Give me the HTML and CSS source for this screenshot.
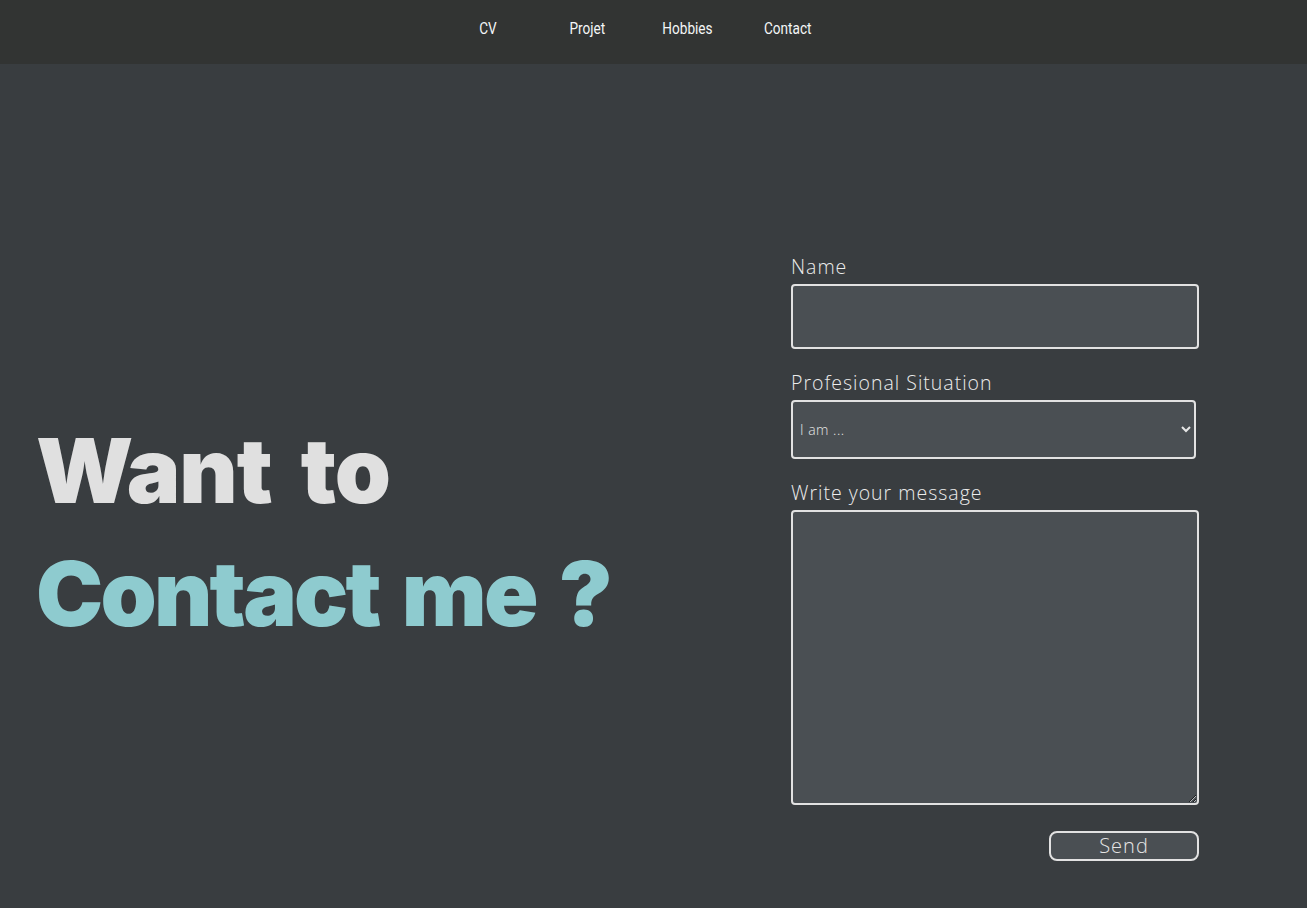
FILE: index.html
```html
<!DOCTYPE html>
<html lang="fr">
<head>
<meta charset="utf-8">
<title>Contact</title>
<link rel="stylesheet" href="styles.css">
</head>
<body>
<header class="topbar">
  <ul class="nav">
    <li><a href="#">CV</a></li>
    <li><a href="#">Projet</a></li>
    <li><a href="#">Hobbies</a></li>
    <li><a href="#">Contact</a></li>
  </ul>
</header>
<main class="page">
  <section class="hero">
    <h1 class="hero-line hero-white">Want to</h1>
    <h1 class="hero-line hero-teal">Contact me ?</h1>
  </section>
  <form class="form">
    <label class="label" for="name">Name</label>
    <input class="field field-name" id="name" type="text">
    <label class="label" for="situation">Profesional Situation</label>
    <select class="field field-select" id="situation">
      <option>I am ...</option>
    </select>
    <label class="label" for="msg">Write your message</label>
    <textarea class="field field-msg" id="msg"></textarea>
    <div class="actions">
      <button class="send" type="button">Send</button>
    </div>
  </form>
</main>
</body>
</html>
```
FILE: styles.css
```css
html, body {
  margin: 0;
  padding: 0;
}
body {
  background: #393d40;
  height: 908px;
  overflow: hidden;
  font-family: "Open Sans", "Liberation Sans", sans-serif;
}
.topbar {
  height: 64px;
  background: #323433;
  display: flex;
  align-items: flex-start;
  justify-content: center;
}
.nav {
  list-style: none;
  margin: 0;
  padding: 17px 32px 0 0;
  display: flex;
}
.nav li {
  width: 100px;
  text-align: center;
  line-height: 22px;
}
.nav a {
  color: #f4f6f7;
  text-decoration: none;
  font-family: "Roboto", "Liberation Sans", sans-serif;
  font-size: 17px;
  display: inline-block;
  transform: scaleX(0.8);
}
.page {
  display: flex;
  align-items: flex-start;
  height: 844px;
}
.hero {
  flex: 1;
  padding-left: 36px;
  padding-top: 345px;
}
.hero-line {
  margin: 0;
  font-family: "Inter", "Liberation Sans", sans-serif;
  font-weight: 900;
  font-size: 90px;
  line-height: 123px;
  letter-spacing: -1px;
  word-spacing: 12px;
}
.hero-white { color: #e0e0e0; }
.hero-teal { color: #8ecbcf; letter-spacing: -2.8px; word-spacing: 8px; }
.form {
  width: 408px;
  margin-right: 108px;
  padding-top: 190px;
  display: flex;
  flex-direction: column;
}
.label {
  color: #ececec;
  font-weight: 300;
  font-size: 19.5px;
  line-height: 25px;
  letter-spacing: 1px;
  margin-bottom: 5px;
}
.field {
  box-sizing: border-box;
  background: #4a4f53;
  border: 2px solid #e2e2e2;
  border-radius: 4px;
  color: #e6e6e6;
  font-family: "Open Sans", "Liberation Sans", sans-serif;
  outline: none;
}
.field-name {
  height: 65px;
  width: 408px;
  margin-bottom: 21px;
}
.field-select {
  height: 59px;
  width: 405px;
  margin-bottom: 21px;
  font-size: 14px;
  font-weight: 300;
  letter-spacing: 0.5px;
  padding-left: 3px;
}
.field-msg {
  height: 295px;
  width: 408px;
  resize: both;
  margin: 0;
}
.actions {
  display: flex;
  justify-content: flex-end;
  margin-top: 26px;
}
.send {
  width: 150px;
  height: 30px;
  box-sizing: border-box;
  background: #4a4f53;
  border: 2px solid #e2e2e2;
  border-radius: 8px;
  color: #e6e6e6;
  font-family: "Open Sans", "Liberation Sans", sans-serif;
  font-weight: 300;
  font-size: 20px;
  letter-spacing: 1px;
  line-height: 24px;
  padding: 0;
}
```
